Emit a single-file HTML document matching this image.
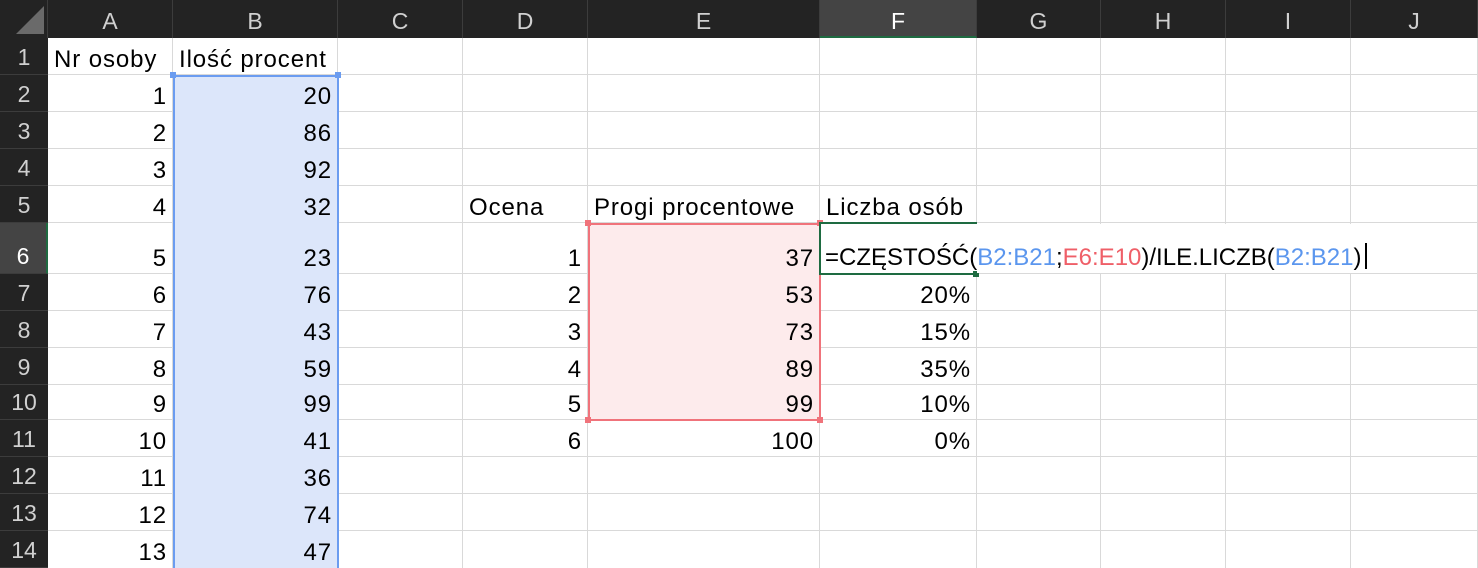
<!DOCTYPE html><html><head><meta charset="utf-8"><style>
body{margin:0;width:1478px;height:568px;overflow:hidden;background:#fff;font-family:"Liberation Sans",Arial,sans-serif;position:relative}
.a{position:absolute;box-sizing:border-box}
.hl{position:absolute;height:1px;background:#d9d9d9;left:48px;width:1430px}
.vl{position:absolute;width:1px;background:#d9d9d9;top:38px;height:530px}
.t{position:absolute;font-size:24px;letter-spacing:0.9px;color:#000;white-space:nowrap;line-height:24px}
.ch{position:absolute;top:0;height:38px;line-height:42px;text-align:center;color:#d0d0d0;font-size:23px;background:#232323;border-right:1px solid #3c3c3c;box-sizing:border-box}
.rh{position:absolute;left:0;width:48px;text-align:center;color:#d0d0d0;font-size:23px;background:#232323;border-bottom:1px solid #3c3c3c;box-sizing:border-box;display:flex;align-items:flex-end;justify-content:center;padding-bottom:3px}
.r{text-align:right}
.b{color:#5b96ee}.rd{color:#ef5f68}
</style></head><body>
<div class="a" style="left:0;top:0;width:48px;height:38px;background:#232323;border-right:1px solid #3c3c3c"></div>
<svg class="a" style="left:14px;top:4px" width="32" height="32"><polygon points="30,2 30,30 2,30" fill="#6a6a6a"/></svg>
<div id="ch"></div><div id="rh"></div><div id="g"></div>
<div class="a" style="left:173px;top:75px;width:166px;height:493px;background:#dce6fa;border:2px solid #6b9cf0;border-bottom:none"></div>
<div class="a" style="left:170px;top:72px;width:6px;height:6px;background:#6b9cf0"></div>
<div class="a" style="left:335px;top:72px;width:6px;height:6px;background:#6b9cf0"></div>
<div class="a" style="left:588px;top:223px;width:233px;height:198px;background:#fdebec;border:2px solid #f0737b"></div>
<div class="a" style="left:585px;top:220px;width:6px;height:6px;background:#f0737b"></div>
<div class="a" style="left:817px;top:220px;width:6px;height:6px;background:#f0737b"></div>
<div class="a" style="left:585px;top:417px;width:6px;height:6px;background:#f0737b"></div>
<div class="a" style="left:817px;top:417px;width:6px;height:6px;background:#f0737b"></div>
<div class="a" style="left:819px;top:222px;width:158px;height:53px;border:2px solid #1e6b41;border-right:none;background:#fff"></div>
<div class="a" style="left:973px;top:271px;width:6px;height:6px;background:#1e6b41"></div>
<div class="a" style="left:977px;top:224px;width:389px;height:49px;background:#fff"></div>
<div class="t" style="left:825px;top:246px;letter-spacing:0px">=CZĘSTOŚĆ(<span class="b">B2:B21</span>;<span class="rd">E6:E10</span>)/ILE.LICZB(<span class="b">B2:B21</span>)</div>
<div class="a" style="left:1365px;top:243px;width:2px;height:26px;background:#000"></div>
<div id="tx"></div>
<script>
const X=[48,173,338,463,588,820,977,1101,1226,1351,1478];
const Y=[38,75,112,149,186,223,274,311,348,385,420,457,494,531,568];
let h='';
"ABCDEFGHIJ".split('').forEach((c,i)=>{let s=i==5?'background:#444;color:#fff;border-bottom:2px solid #1e6b41;':'';h+=`<div class="ch" style="left:${X[i]}px;width:${X[i+1]-X[i]}px;${s}">${c}</div>`});
document.getElementById('ch').innerHTML=h;h='';
for(let r=0;r<14;r++){let s=r==5?'background:#444;color:#fff;border-right:2px solid #1e6b41;':'';h+=`<div class="rh" style="top:${Y[r]}px;height:${Y[r+1]-Y[r]}px;${s}">${r+1}</div>`}
document.getElementById('rh').innerHTML=h;h='';
for(let r=1;r<14;r++)h+=`<div class="hl" style="top:${Y[r]-1}px"></div>`;
for(let c=1;c<11;c++)h+=`<div class="vl" style="left:${X[c]-1}px"></div>`;
document.getElementById('g').innerHTML=h;
h='';
function T(col,row,txt,right){let x=X[col],w=X[col+1]-X[col],y=Y[row+1]-27;
 h+=right?`<div class="t r" style="left:${x}px;width:${w-6}px;top:${y}px">${txt}</div>`:`<div class="t" style="left:${x+6}px;top:${y}px">${txt}</div>`;}
T(0,0,'Nr osoby');T(1,0,'Ilość procent');
const B=[20,86,92,32,23,76,43,59,99,41,36,74,47];
for(let i=0;i<13;i++){T(0,i+1,i+1,1);T(1,i+1,B[i],1);}
T(3,4,'Ocena');T(4,4,'Progi procentowe');T(5,4,'Liczba osób');
const E=[37,53,73,89,99,100],F=['','20%','15%','35%','10%','0%'];
for(let i=0;i<6;i++){T(3,i+5,i+1,1);T(4,i+5,E[i],1);if(i)T(5,i+5,F[i],1);}
document.getElementById('tx').innerHTML=h;
</script>
</body></html>
